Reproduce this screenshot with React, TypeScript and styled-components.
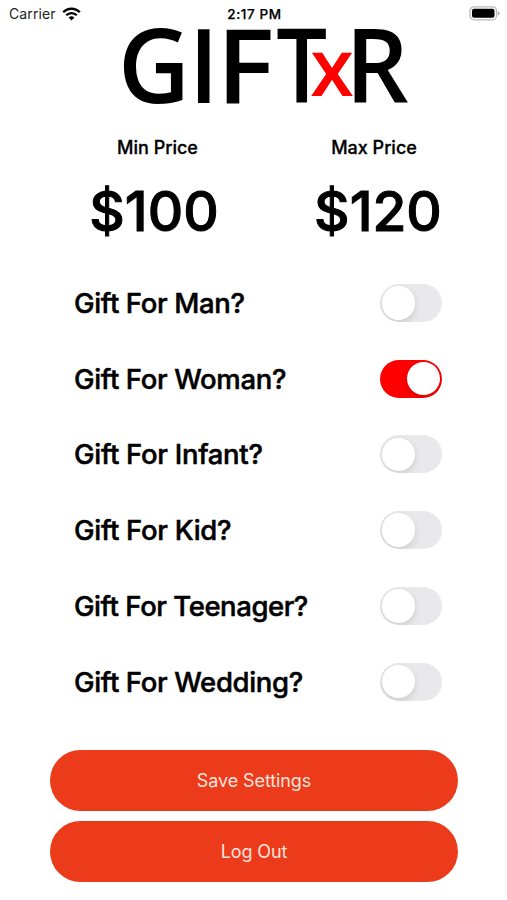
import React, { useState } from "react";
import styled, { createGlobalStyle } from "styled-components";

const GlobalStyle = createGlobalStyle`
  * { box-sizing: border-box; }
  body {
    margin: 0;
    background: #fff;
    color: #000;
    font-family: Inter, "Liberation Sans", sans-serif;
  }
`;

const Screen = styled.main`
  display: flex;
  flex-direction: column;
  width: 507px;
  height: 900px;
  overflow: hidden;
  background: #fff;
`;

const StatusBar = styled.header`
  display: grid;
  grid-template-columns: 1fr auto 1fr;
  align-items: center;
  height: 27px;
  padding: 0 7px 0 9px;
  font-size: 14px;
  line-height: 18px;
`;

const Carrier = styled.div`
  display: flex;
  align-items: center;
  gap: 6px;
  letter-spacing: 0.1px;
  color: #222;
`;

const Clock = styled.time`
  font-size: 13.5px;
  font-weight: 500;
  letter-spacing: 0.6px;
  -webkit-text-stroke: 0.25px #000;
`;

const BatteryIcon = styled.svg`
  justify-self: end;
`;

const Logo = styled.svg`
  display: block;
  flex: none;
  width: 507px;
  height: 85px;
  overflow: visible;
  font-family: "Open Sans", sans-serif;
`;

const Prices = styled.section`
  display: grid;
  grid-template-columns: 216px 216px;
  justify-content: center;
  padding-left: 17px;
  height: 153px;
`;

const Price = styled.div`
  display: flex;
  flex-direction: column;
  align-items: center;
  padding-top: 23px;
`;

const PriceLabel = styled.span<{ $shift: number }>`
  font-size: 18px;
  line-height: 26px;
  font-weight: 500;
  -webkit-text-stroke: 0.3px #000;
  margin-left: ${(p) => p.$shift}px;
`;

const PriceValue = styled.span<{ $shift: number }>`
  margin-top: 17px;
  margin-left: ${(p) => p.$shift}px;
  font-size: 55px;
  line-height: 66px;
  font-weight: 500;
  letter-spacing: 0;
  -webkit-text-stroke: 1px #000;
`;

const Options = styled.section`
  display: flex;
  flex-direction: column;
  padding: 0 65px 0 74px;
`;

const OptionRow = styled.label`
  display: flex;
  align-items: center;
  justify-content: space-between;
  height: 75.75px;
`;

const OptionName = styled.span<{ $spacing: number }>`
  font-size: 27.5px;
  font-weight: 500;
  -webkit-text-stroke: 0.5px #000;
  white-space: nowrap;
  letter-spacing: ${(p) => p.$spacing}px;
`;

const Switch = styled.button<{ $on: boolean }>`
  display: flex;
  align-items: center;
  justify-content: ${(p) => (p.$on ? "flex-end" : "flex-start")};
  width: 62.5px;
  height: 38px;
  padding: 0 2px;
  border: 0;
  border-radius: 19px;
  background: ${(p) => (p.$on ? "#ff0000" : "#e9e9eb")};
  overflow: hidden;
`;

const Knob = styled.span`
  width: 33.5px;
  height: 33.5px;
  border-radius: 50%;
  background: #fff;
  box-shadow: 0 3px 7px rgba(0, 0, 0, 0.13);
`;

const Actions = styled.footer`
  display: flex;
  flex-direction: column;
  gap: 10px;
  margin: 30px 49px 0 50px;
`;

const ActionButton = styled.button`
  height: 61px;
  padding: 0;
  border: 0;
  border-radius: 31px;
  background: #eb3b1b;
  color: #ffe3dc;
  font: 400 18px Inter, sans-serif;
  letter-spacing: -0.1px;
`;

const options = [
  { name: "Gift For Man?", spacing: -0.35 },
  { name: "Gift For Woman?", spacing: -0.35 },
  { name: "Gift For Infant?", spacing: -0.3 },
  { name: "Gift For Kid?", spacing: -0.3 },
  { name: "Gift For Teenager?", spacing: -0.45 },
  { name: "Gift For Wedding?", spacing: -0.35 },
];

export default function App() {
  const [selected, setSelected] = useState<string[]>(["Gift For Woman?"]);
  const toggle = (name: string) =>
    setSelected((s) => (s.includes(name) ? s.filter((n) => n !== name) : [...s, name]));

  return (
    <>
      <GlobalStyle />
      <Screen>
        <StatusBar>
          <Carrier>
            Carrier
            <svg width="19" height="14" viewBox="0 0 19 14" fill="none" stroke="#000" strokeWidth="2.3">
              <path d="M1.2 5.2A11.7 11.7 0 0 1 17.8 5.2" />
              <path d="M4.2 8.3A7.5 7.5 0 0 1 14.8 8.3" />
              <path d="M6.6 10.6A4.1 4.1 0 0 1 12.4 10.6L9.5 13.5Z" fill="#000" stroke="none" />
            </svg>
          </Carrier>
          <Clock>2:17 PM</Clock>
          <BatteryIcon width="31" height="15" viewBox="0 0 31 15">
            <rect x="1" y="0.8" width="26.5" height="13" rx="4" fill="#fff" stroke="#b9b9b9" strokeWidth="1.3" />
            <rect x="3" y="2.8" width="22.5" height="9" rx="2" fill="#000" />
            <path d="M28.8 5v4.6q1.7-.8 1.7-2.3T28.8 5z" fill="#aaa" />
          </BatteryIcon>
        </StatusBar>
        <Logo viewBox="0 27 507 85" fontSize="102.5" fontWeight="600">
          <text transform="translate(117.9 102.5) scale(0.97 1)">G</text>
          <text transform="translate(188.8 102.5) scale(0.96 1)">I</text>
          <text transform="translate(216.4 102.5) scale(1.06 1)">F</text>
          <text transform="translate(276.3 102.5) scale(0.88 1)">T</text>
          <text transform="translate(345.3 102.5) scale(0.97 1)">R</text>
          <text x="310.2" y="96" fontSize="79" fill="#ff0000">x</text>
        </Logo>
        <Prices>
          <Price>
            <PriceLabel $shift={7}>Min Price</PriceLabel>
            <PriceValue $shift={0}>$100</PriceValue>
          </Price>
          <Price>
            <PriceLabel $shift={8}>Max Price</PriceLabel>
            <PriceValue $shift={16}>$120</PriceValue>
          </Price>
        </Prices>
        <Options>
          {options.map(({ name, spacing }) => {
            const on = selected.includes(name);
            return (
              <OptionRow key={name}>
                <OptionName $spacing={spacing}>{name}</OptionName>
                <Switch type="button" role="switch" aria-checked={on} $on={on} onClick={() => toggle(name)}>
                  <Knob />
                </Switch>
              </OptionRow>
            );
          })}
        </Options>
        <Actions>
          <ActionButton>Save Settings</ActionButton>
          <ActionButton>Log Out</ActionButton>
        </Actions>
      </Screen>
    </>
  );
}
